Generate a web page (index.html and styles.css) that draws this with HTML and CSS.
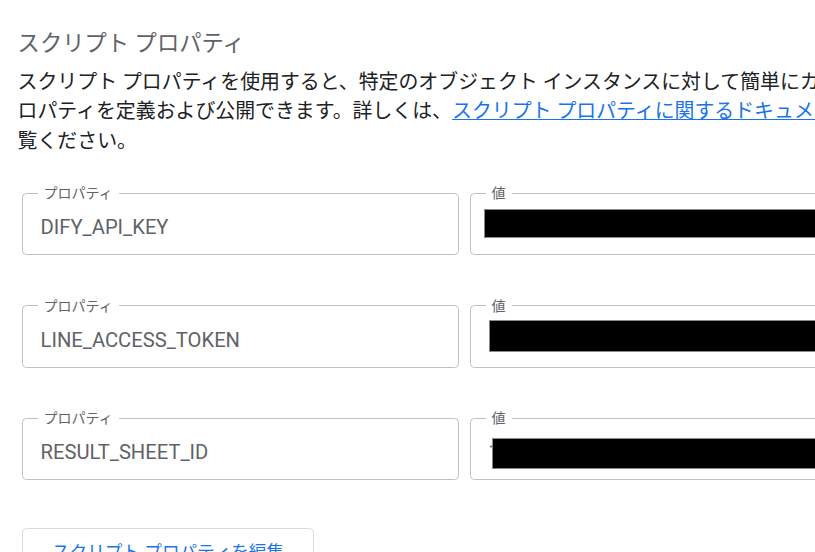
FILE: index.html
```html
<!DOCTYPE html>
<html lang="ja">
<head>
    <meta charset="UTF-8">
    <meta name="viewport" content="width=device-width, initial-scale=1.0">
    <title>スクリプト プロパティ</title>
    <link rel="stylesheet" href="styles.css">
</head>
<body>
    <div class="page">
        <h2 class="title">スクリプト プロパティ</h2>
        <p class="desc">
            スクリプト プロパティを使用すると、特定のオブジェクト インスタンスに対して簡単にカスタム プロパティを定義および公開できます。詳しくは、<a href="#">スクリプト プロパティに関するドキュメント</a>をご覧ください。
        </p>

        <div class="props">
            <div class="prop-row">
                <fieldset class="field">
                    <legend>プロパティ</legend>
                    <div class="field-value">DIFY_API_KEY</div>
                </fieldset>
                <fieldset class="field">
                    <legend>値</legend>
                    <div class="field-value"></div>
                    <!-- 値は伏せ字 -->
                    <span class="redact redact-1"></span>
                </fieldset>
            </div>

            <div class="prop-row">
                <fieldset class="field">
                    <legend>プロパティ</legend>
                    <div class="field-value">LINE_ACCESS_TOKEN</div>
                </fieldset>
                <fieldset class="field">
                    <legend>値</legend>
                    <div class="field-value"></div>
                    <span class="redact redact-2"></span>
                </fieldset>
            </div>

            <div class="prop-row">
                <fieldset class="field">
                    <legend>プロパティ</legend>
                    <div class="field-value">RESULT_SHEET_ID</div>
                </fieldset>
                <fieldset class="field">
                    <legend>値</legend>
                    <div class="field-value">1</div>
                    <span class="redact redact-3"></span>
                </fieldset>
            </div>
        </div>

        <button class="edit-btn" type="button">スクリプト プロパティを編集</button>
    </div>
</body>
</html>
```

FILE: styles.css
```css
html, body {
    margin: 0;
    overflow: hidden;
    background: #fff;
}
body {
    font-family: Roboto, "Noto Sans CJK JP", sans-serif;
    color: #202124;
}
.page {
    width: 890px;
    padding: 29px 0 0 17.6px;
}
.title {
    margin: 0 0 10.5px;
    font-size: 22.3px;
    font-weight: 400;
    line-height: 28px;
    color: #5f6368;
}
.desc {
    margin: 0;
    font-size: 19.9px;
    line-height: 29.7px;
    color: #202124;
}
.desc a {
    color: #1a73e8;
    text-decoration: underline;
}
.props {
    margin: 28.4px 0 0 4.4px;
    display: flex;
    flex-direction: column;
    gap: 42.5px;
}
.prop-row {
    display: grid;
    grid-template-columns: 437px 437px;
    gap: 11px;
}
.field {
    position: relative;
    margin: 0;
    padding: 2px 17.6px 3px;
    border: 1px solid #bdc1c6;
    border-radius: 4.4px;
    min-width: 0;
}
.field legend {
    margin-left: -3px;
    padding: 0 6px;
    font-size: 14px;
    line-height: 16px;
    color: #5f6368;
}
.field-value {
    height: 48px;
    font-size: 20.2px;
    line-height: 48px;
    color: #5f6368;
    white-space: nowrap;
}
.redact {
    position: absolute;
    right: -40px;
    background: #000;
    box-shadow: 0 0 0 1px #8a8a8a;
}
.redact-1 {
    left: 14px;
    top: 9px;
    height: 27px;
}
.redact-2 {
    left: 19px;
    top: 7px;
    height: 30px;
}
.redact-3 {
    left: 22px;
    top: 13px;
    height: 29px;
}
.edit-btn {
    margin: 48px 0 0 4.4px;
    height: 44px;
    padding: 0 29px;
    background: #fff;
    border: 1px solid #dadce0;
    border-radius: 4.4px;
    font-family: Roboto, "Noto Sans CJK JP", sans-serif;
    font-size: 17.6px;
    color: #1a73e8;
    cursor: pointer;
}
```
